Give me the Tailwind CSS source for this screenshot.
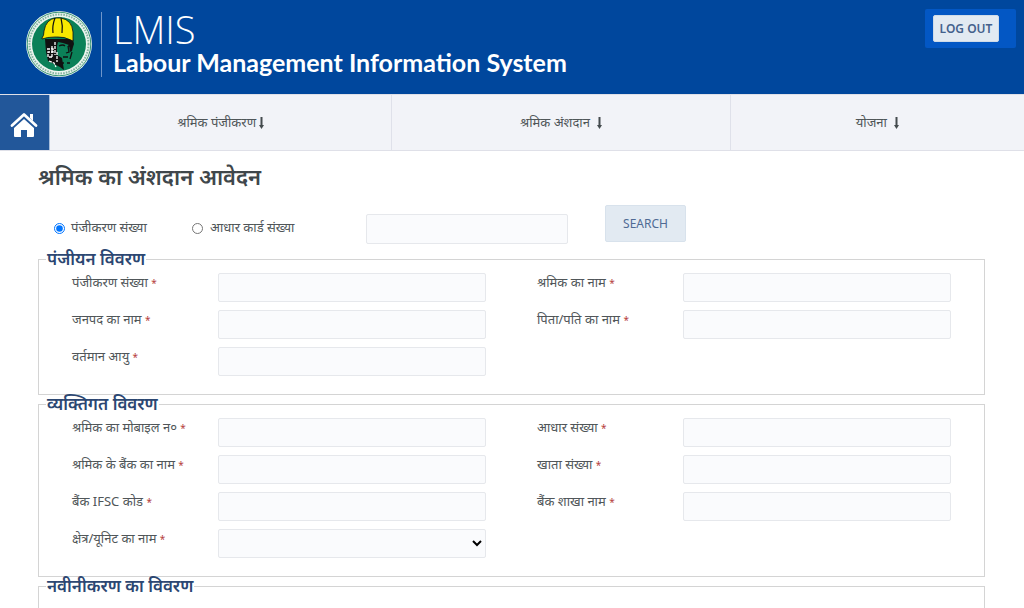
<!DOCTYPE html>
<html lang="hi">
<head>
<meta charset="utf-8">
<meta name="viewport" content="width=device-width, initial-scale=1">
<title>LMIS</title>
<script src="https://cdn.jsdelivr.net/npm/@tailwindcss/browser@4"></script>
</head>
<body class="bg-white font-['Noto_Sans',sans-serif] text-[13px] text-[#505659]">
<header class="flex h-[94px] items-start bg-[#00479d] pl-[26px] pr-2 text-white">
  <svg class="mt-[11px] size-[66px] shrink-0" viewBox="0 0 66 66" role="img" aria-label="LMIS">
    <circle cx="33" cy="33" r="33" fill="#edf5ef"/>
    <circle cx="33" cy="33" r="31.800" fill="none" stroke="#0b7d57" stroke-width=".8"/>
    <circle cx="33" cy="33" r="29.500" fill="none" stroke="#86b5a3" stroke-width="2" stroke-dasharray="1.600 1.100"/>
    <circle cx="33" cy="33" r="27" fill="#0b8158"/>
    <path d="M19 28h28l1 5-1 3-1 4-2 1-1-7-6-2-5-1-1 4v9l5 3 2 12-4-3-12-6-2-9z" fill="#111"/>
    <path d="M33 35q4-2 6 0M42 35h4M42 35l1 6-3 1M46 41l-2 7M37 46h5M36 52h2M41 52h3" fill="none" stroke="#111" stroke-width="1.300"/>
    <path d="M21 38h6v3h-5v5h5M29 31v13M26 35v12M31 41v10M23 50l5 2 2 4" fill="none" stroke="#fff" stroke-width="1.300" stroke-dasharray="3 1"/>
    <path d="M16 27q2-2 2-7Q20 8 30 7h5q11 2 12 14v9q-9-5-18-4-8 0-13 2z" fill="#f8e800" stroke="#111" stroke-width=".8"/>
    <path d="M29 7q-3 8-2 15M35 7q2 8 1 15" fill="none" stroke="#111" stroke-width="1.200"/>
  </svg>
  <div class="ml-[9px] mt-3 flex h-[65px] flex-col border-l border-[#6f96cb] pl-[11px]">
    <span class="font-['Open_Sans',sans-serif] text-[38px] font-light leading-[34px]">LMIS</span>
    <span class="whitespace-nowrap font-['Lato',sans-serif] text-[25px] font-bold leading-[32px]">Labour Management Information System</span>
  </div>
  <div class="ml-auto mt-[9px] rounded-xs bg-[#0357c4] py-[6px] pl-2 pr-[17px]">
    <button type="button" class="flex h-[27px] w-[66px] items-center justify-center rounded-xs border border-[#cfdbe8] bg-[#e2eaf2] text-[12px] font-semibold text-[#44618c]">LOG OUT</button>
  </div>
</header>
<nav class="flex h-[57px] border-y border-[#dfe0e8] bg-[#f2f3f8]">
  <a href="#" aria-label="Home" class="flex w-[50px] shrink-0 items-center justify-center border-r border-[#a9bedb] bg-[#22579a] pr-[2px] pt-1">
    <svg class="h-[27px] w-7" viewBox="0 0 28 27" fill="none"><path d="M2 14.500 14 3.500l12 11" stroke="#fff" stroke-width="2.800" stroke-linecap="round" stroke-linejoin="round"/><path d="M20 3h3v7L20 7zM14 8l10 9v8q0 1-1 1h-6v-7h-6v7H5q-1 0-1-1v-8z" fill="#fff"/></svg>
  </a>
  <a href="#" class="flex grow-[342] basis-0 items-center justify-center gap-[3px] border-r border-[#dfe1ea]">श्रमिक पंजीकरण <svg class="h-3 w-[5px]" viewBox="0 0 5 12" fill="#444b4e"><path d="M1.500 0h2v8H5L2.500 12 0 8h1.500z"/></svg></a>
  <a href="#" class="flex grow-[338] basis-0 items-center justify-center gap-[7px] border-r border-[#dfe1ea]">श्रमिक अंशदान <svg class="h-3 w-[5px]" viewBox="0 0 5 12" fill="#444b4e"><path d="M1.500 0h2v8H5L2.500 12 0 8h1.500z"/></svg></a>
  <a href="#" class="flex grow-[294] basis-0 items-center justify-center gap-[7px]">योजना <svg class="h-3 w-[5px]" viewBox="0 0 5 12" fill="#444b4e"><path d="M1.500 0h2v8H5L2.500 12 0 8h1.500z"/></svg></a>
</nav>
<main class="h-[calc(100vh-151px)] overflow-hidden pl-[38px] pr-[39px]">
  <h1 class="pb-[3px] pt-[10px] text-[22px] font-semibold leading-[30px] text-[#3f474b]">श्रमिक का अंशदान आवेदन</h1>
  <form>
    <div class="flex h-[56px] items-start pl-4 pt-[11px]">
      <div class="flex h-[46px] w-[138px] items-center gap-[6px]"><input type="radio" id="r1" name="kind" checked class="size-[11px]"><label for="r1">पंजीकरण संख्या</label></div>
      <div class="flex h-[46px] w-[174px] items-center gap-[7px]"><input type="radio" id="r2" name="kind" class="size-[11px]"><label for="r2">आधार कार्ड संख्या</label></div>
      <input type="text" aria-label="संख्या" class="mt-[9px] h-[30px] w-[202px] rounded-xs border border-[#e6e8ec] bg-[#fafbfd] px-2">
      <button type="button" class="ml-[37px] h-[37px] w-[81px] rounded-xs border border-[#d8e2ec] bg-[#e2eaf2] text-[12px] text-[#4f6a94]">SEARCH</button>
    </div>
    <fieldset class="border border-[#d4d4d4] px-[33px] pb-[18px]">
      <legend class="-ml-[26px] px-px text-[17px] font-semibold leading-[18px] text-[#2c4772]">पंजीयन विवरण</legend>
      <div class="grid grid-cols-2 gap-x-[51px] gap-y-2 pt-[5px]">
        <div class="flex"><label for="a1" class="w-[146px] shrink-0 leading-[18px]">पंजीकरण संख्या <span class="text-[10px] text-[#b5403c]">*</span></label><input id="a1" type="text" class="h-[29px] w-full min-w-0 rounded-xs border border-[#e6e8ec] bg-[#fafbfd] px-2"></div>
        <div class="flex"><label for="a2" class="w-[146px] shrink-0 leading-[18px]">श्रमिक का नाम <span class="text-[10px] text-[#b5403c]">*</span></label><input id="a2" type="text" class="h-[29px] w-full min-w-0 rounded-xs border border-[#e6e8ec] bg-[#fafbfd] px-2"></div>
        <div class="flex"><label for="a3" class="w-[146px] shrink-0 leading-[18px]">जनपद का नाम <span class="text-[10px] text-[#b5403c]">*</span></label><input id="a3" type="text" class="h-[29px] w-full min-w-0 rounded-xs border border-[#e6e8ec] bg-[#fafbfd] px-2"></div>
        <div class="flex"><label for="a4" class="w-[146px] shrink-0 leading-[18px]">पिता/पति का नाम <span class="text-[10px] text-[#b5403c]">*</span></label><input id="a4" type="text" class="h-[29px] w-full min-w-0 rounded-xs border border-[#e6e8ec] bg-[#fafbfd] px-2"></div>
        <div class="flex"><label for="a5" class="w-[146px] shrink-0 leading-[18px]">वर्तमान आयु <span class="text-[10px] text-[#b5403c]">*</span></label><input id="a5" type="text" class="h-[29px] w-full min-w-0 rounded-xs border border-[#e6e8ec] bg-[#fafbfd] px-2"></div>
      </div>
    </fieldset>
    <fieldset class="border border-[#d4d4d4] px-[33px] pb-[18px]">
      <legend class="-ml-[26px] px-px text-[17px] font-semibold leading-[18px] text-[#2c4772]">व्यक्तिगत विवरण</legend>
      <div class="grid grid-cols-2 gap-x-[51px] gap-y-2 pt-[5px]">
        <div class="flex"><label for="b1" class="w-[146px] shrink-0 leading-[18px]">श्रमिक का मोबाइल न० <span class="text-[10px] text-[#b5403c]">*</span></label><input id="b1" type="text" class="h-[29px] w-full min-w-0 rounded-xs border border-[#e6e8ec] bg-[#fafbfd] px-2"></div>
        <div class="flex"><label for="b2" class="w-[146px] shrink-0 leading-[18px]">आधार संख्या <span class="text-[10px] text-[#b5403c]">*</span></label><input id="b2" type="text" class="h-[29px] w-full min-w-0 rounded-xs border border-[#e6e8ec] bg-[#fafbfd] px-2"></div>
        <div class="flex"><label for="b3" class="w-[146px] shrink-0 leading-[18px]">श्रमिक के बैंक का नाम <span class="text-[10px] text-[#b5403c]">*</span></label><input id="b3" type="text" class="h-[29px] w-full min-w-0 rounded-xs border border-[#e6e8ec] bg-[#fafbfd] px-2"></div>
        <div class="flex"><label for="b4" class="w-[146px] shrink-0 leading-[18px]">खाता संख्या <span class="text-[10px] text-[#b5403c]">*</span></label><input id="b4" type="text" class="h-[29px] w-full min-w-0 rounded-xs border border-[#e6e8ec] bg-[#fafbfd] px-2"></div>
        <div class="flex"><label for="b5" class="w-[146px] shrink-0 leading-[18px]">बैंक IFSC कोड <span class="text-[10px] text-[#b5403c]">*</span></label><input id="b5" type="text" class="h-[29px] w-full min-w-0 rounded-xs border border-[#e6e8ec] bg-[#fafbfd] px-2"></div>
        <div class="flex"><label for="b6" class="w-[146px] shrink-0 leading-[18px]">बैंक शाखा नाम <span class="text-[10px] text-[#b5403c]">*</span></label><input id="b6" type="text" class="h-[29px] w-full min-w-0 rounded-xs border border-[#e6e8ec] bg-[#fafbfd] px-2"></div>
        <div class="flex"><label for="b7" class="w-[146px] shrink-0 leading-[18px]">क्षेत्र/यूनिट का नाम <span class="text-[10px] text-[#b5403c]">*</span></label><select id="b7" class="h-[29px] w-full min-w-0 rounded-xs border border-[#e6e8ec] bg-[#fafbfd] text-black"><option></option></select></div>
      </div>
    </fieldset>
    <fieldset class="border border-[#d4d4d4] px-[33px] pb-[60px]">
      <legend class="-ml-[26px] px-px text-[17px] font-semibold leading-[18px] text-[#2c4772]">नवीनीकरण का विवरण</legend>
    </fieldset>
  </form>
</main>
</body>
</html>
